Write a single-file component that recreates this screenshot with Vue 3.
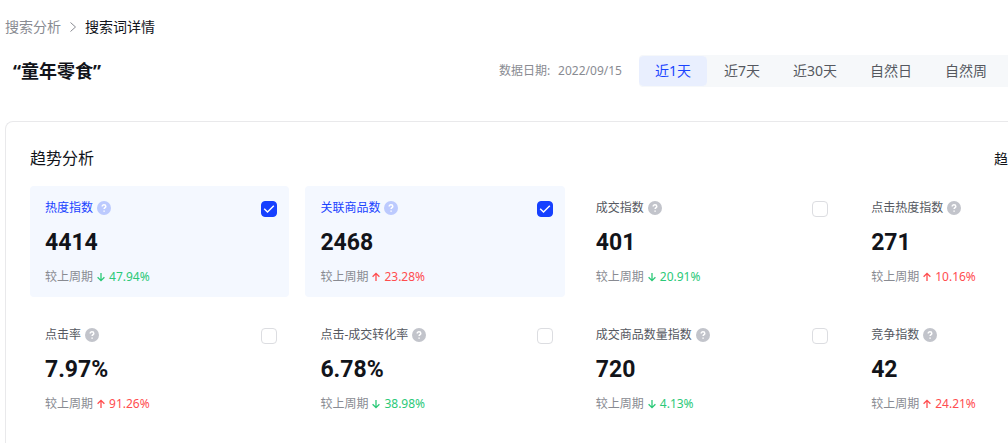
<script setup>
import { ref } from 'vue'

const ranges = ['近1天', '近7天', '近30天', '自然日', '自然周']
const activeRange = ref('近1天')

const metrics = ref([
  { id: 'heat', name: '热度指数', value: '4414', trend: 'down', change: '47.94%', checked: true },
  { id: 'goods', name: '关联商品数', value: '2468', trend: 'up', change: '23.28%', checked: true },
  { id: 'deal', name: '成交指数', value: '401', trend: 'down', change: '20.91%', checked: false },
  { id: 'click-heat', name: '点击热度指数', value: '271', trend: 'up', change: '10.16%', checked: false },
  { id: 'click-rate', name: '点击率', value: '7.97%', trend: 'up', change: '91.26%', checked: false },
  { id: 'conversion', name: '点击-成交转化率', value: '6.78%', trend: 'down', change: '38.98%', checked: false },
  { id: 'deal-goods', name: '成交商品数量指数', value: '720', trend: 'down', change: '4.13%', checked: false },
  { id: 'competition', name: '竞争指数', value: '42', trend: 'up', change: '24.21%', checked: false }
])
</script>

<template>
  <main class="page">
    <nav class="breadcrumb">
      <a href="#">搜索分析</a>
      <svg class="chevron" viewBox="0 0 8 12" aria-hidden="true"><path d="M1.5 1.5 6.5 6l-5 4.5" /></svg>
      <span class="current">搜索词详情</span>
    </nav>

    <header class="toolbar">
      <h1>“童年零食”</h1>
      <p class="date"><span>数据日期:</span><span>2022/09/15</span></p>
      <div class="ranges">
        <button
          v-for="r in ranges"
          :key="r"
          type="button"
          :class="{ active: r === activeRange }"
          @click="activeRange = r"
        >{{ r }}</button>
      </div>
    </header>

    <section class="panel">
      <div class="panel-head">
        <h2>趋势分析</h2>
        <span class="side">趋</span>
      </div>
      <div class="grid">
        <article v-for="m in metrics" :key="m.id" class="card" :class="{ selected: m.checked }">
          <div class="card-head">
            <label :for="m.id">{{ m.name }}</label>
            <svg class="help" viewBox="0 0 14 14" aria-hidden="true">
              <circle cx="7" cy="7" r="7" />
              <path d="M5.2 5.6c0-1.1.8-1.8 1.8-1.8s1.8.7 1.8 1.6c0 1.2-1.7 1.3-1.7 2.7" />
              <path d="M7.1 9.6v1.2" />
            </svg>
            <span class="check">
              <input :id="m.id" v-model="m.checked" type="checkbox" />
              <svg v-if="m.checked" viewBox="0 0 16 16" aria-hidden="true"><path d="m3.2 7.8 3.3 3.3 6.3-6.3" /></svg>
            </span>
          </div>
          <strong class="value">{{ m.value }}</strong>
          <p class="compare">
            <span>较上周期</span>
            <span class="change" :class="m.trend">
              <svg viewBox="0 0 8 10" aria-hidden="true">
                <path v-if="m.trend === 'up'" d="M4 9V1.5M.6 4.8 4 1.4l3.4 3.4" />
                <path v-else d="M4 1v7.5M.6 5.2 4 8.6l3.4-3.4" />
              </svg>
              {{ m.change }}
            </span>
          </p>
        </article>
      </div>
    </section>
  </main>
</template>

<style>
body {
  margin: 0;
  background: #fff;
}
</style>

<style scoped>
.page {
  box-sizing: border-box;
  height: 100vh;
  overflow: hidden;
  padding: 16px 0 0 5px;
  color: #12141a;
  font-family: "Noto Sans", "Noto Sans CJK SC", sans-serif;
  font-size: 14px;
}

h1,
h2,
p {
  margin: 0;
}

.breadcrumb {
  display: flex;
  align-items: center;
  gap: 8px;
  line-height: 22px;
}

.breadcrumb a {
  color: #898b92;
  text-decoration: none;
}

.chevron {
  width: 8px;
  height: 12px;
  fill: none;
  stroke: #898b92;
}

.toolbar {
  display: flex;
  align-items: center;
  margin-top: 17px;
  padding: 0 5px 0 8px;
}

h1 {
  flex: 1;
  font-size: 18px;
  font-weight: 700;
  line-height: 30px;
}

.date {
  display: flex;
  gap: 8px;
  margin-right: 17px;
  color: #898b92;
  font-size: 12px;
  line-height: 20px;
}

.ranges {
  display: flex;
  gap: 1px;
  border-radius: 4px 0 0 4px;
  background: #f6f8fa;
  box-shadow: 5px 0 0 #f6f8fa;
}

.ranges button {
  height: 32px;
  padding: 0 16px;
  border: 1px solid #f6f8fa;
  border-width: 1px 0;
  border-radius: 5px;
  background: transparent;
  color: #55585f;
  font: inherit;
  line-height: 30px;
}

.ranges .active {
  background: #e9effe;
  color: #1a43ff;
}

.panel {
  margin-top: 34px;
  padding: 24px 0 24px 24px;
  border: 1px solid #e9e9eb;
  border-right: 0;
  border-radius: 8px 0 0 0;
}

.panel-head {
  display: flex;
  align-items: center;
  justify-content: space-between;
  margin-bottom: 16px;
}

h2 {
  font-size: 16px;
  font-weight: 400;
  line-height: 24px;
}

.grid {
  display: grid;
  grid-template-columns: repeat(4, 1fr);
  gap: 16px;
  width: 111%;
}

.card {
  padding: 12px 12px 10px 15px;
  border-radius: 4px;
}

.selected {
  background: #f4f8ff;
}

.card-head {
  display: flex;
  align-items: center;
  gap: 4px;
  height: 20px;
  color: #55585f;
  font-size: 12px;
  line-height: 20px;
}

.selected .card-head {
  color: #1a43ff;
}

.help {
  width: 14px;
  height: 14px;
  fill: none;
  stroke: #fff;
  stroke-width: 1.5;
}

.help circle {
  fill: #c2c4cb;
  stroke: none;
}

.selected .help circle {
  fill: #bccafe;
}

.check {
  display: grid;
  margin-top: 2px;
  margin-left: auto;
}

.check > * {
  grid-area: 1 / 1;
  box-sizing: border-box;
  width: 16px;
  height: 16px;
  margin: 0;
}

.check input {
  appearance: none;
  border: 1px solid #dcdde1;
  border-radius: 4px;
  background: #fff;
}

.check input:checked {
  border-color: #1640ff;
  background: #1640ff;
}

.check svg {
  fill: none;
  stroke: #fff;
  stroke-width: 1.4;
  pointer-events: none;
}

.value {
  display: block;
  margin: 9px 0 8px;
  font-family: Roboto, sans-serif;
  font-size: 23px;
  font-weight: 700;
  line-height: 32px;
}

.compare {
  display: flex;
  gap: 4px;
  color: #898b92;
  font-size: 12px;
  line-height: 20px;
}

.change {
  display: flex;
  align-items: center;
  gap: 4px;
}

.change svg {
  width: 8px;
  height: 10px;
  fill: none;
  stroke: currentColor;
  stroke-width: 1.3;
}

.up {
  color: #ff4d4f;
}

.down {
  color: #2bc978;
}
</style>
